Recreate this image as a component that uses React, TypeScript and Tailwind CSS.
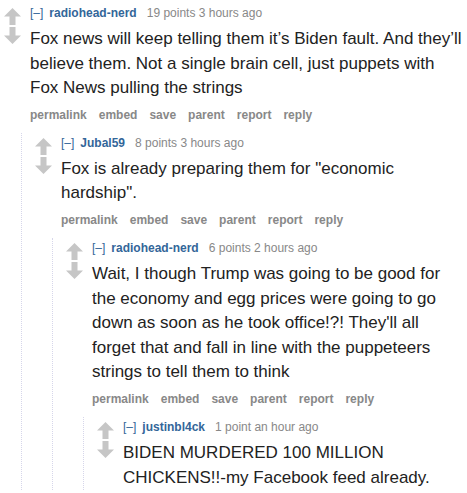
import React from "react";

type Comment = {
  author: string;
  score: string;
  time: string;
  body: React.ReactNode;
  children?: Comment[];
};

const thread: Comment = {
  author: "radiohead-nerd",
  score: "19 points",
  time: "3 hours ago",
  body: "Fox news will keep telling them it’s Biden fault. And they’ll believe them. Not a single brain cell, just puppets with Fox News pulling the strings",
  children: [
    {
      author: "Jubal59",
      score: "8 points",
      time: "3 hours ago",
      body: 'Fox is already preparing them for "economic hardship".',
      children: [
        {
          author: "radiohead-nerd",
          score: "6 points",
          time: "2 hours ago",
          body: "Wait, I though Trump was going to be good for the economy and egg prices were going to go down as soon as he took office!?! They'll all forget that and fall in line with the puppeteers strings to tell them to think",
          children: [
            {
              author: "justinbl4ck",
              score: "1 point",
              time: "an hour ago",
              body: (
                <>
                  BIDEN MURDERED 100 MILLION
                  <br />
                  CHICKENS!!-my Facebook feed already.
                </>
              ),
            },
          ],
        },
      ],
    },
  ],
};

const Arrow = ({ down }: { down?: boolean }) => (
  <svg width="17" height="17" viewBox="0 0 17 17" className={down ? "rotate-180" : ""}>
    <path d="M8.5 0 L17 8.5 L11.5 8.5 L11.5 17 L5.5 17 L5.5 8.5 L0 8.5 Z" fill="#c6c6c6" />
  </svg>
);

const buttons = ["permalink", "embed", "save", "parent", "report", "reply"];

const CommentRow = ({ c, top }: { c: Comment; top?: boolean }) => (
  <div className={top ? "pt-[5px]" : "pt-[2px]"}>
    <div className="flex">
      <div className="w-[30px] shrink-0 pl-[4px] pt-[3px] flex flex-col gap-[2px]">
        <Arrow />
        <Arrow down />
      </div>
      <div className="flex-1 pr-[5px]">
        <p className="text-[12px] leading-[16px] text-[#888888]">
          <span className="text-[#336699]">[–]</span>
          <span className="ml-[6px] font-bold text-[#336699]">{c.author}</span>
          <span className="ml-[10px]">{c.score} {c.time}</span>
        </p>
        <div className="mt-[6px] text-[17px] leading-[24.6px] text-[#222222]">{c.body}</div>
        {c.children ? (
          <div className="mt-[6px] flex gap-[12px] text-[12px] leading-[16px] font-bold text-[#888888]">
            {buttons.map((b) => (
              <span key={b}>{b}</span>
            ))}
          </div>
        ) : null}
      </div>
    </div>
    {c.children ? (
      <div className="mt-[10px] ml-[21px] border-l border-dotted border-[#d6d6ea] pl-[9px]">
        {c.children.map((k) => (
          <CommentRow key={k.author + k.score} c={k} />
        ))}
      </div>
    ) : null}
  </div>
);

export default function App() {
  return (
    <div className="w-[467px] h-[493px] overflow-hidden bg-white font-['Liberation_Sans',Arial,sans-serif]">
      <CommentRow c={thread} top />
    </div>
  );
}
